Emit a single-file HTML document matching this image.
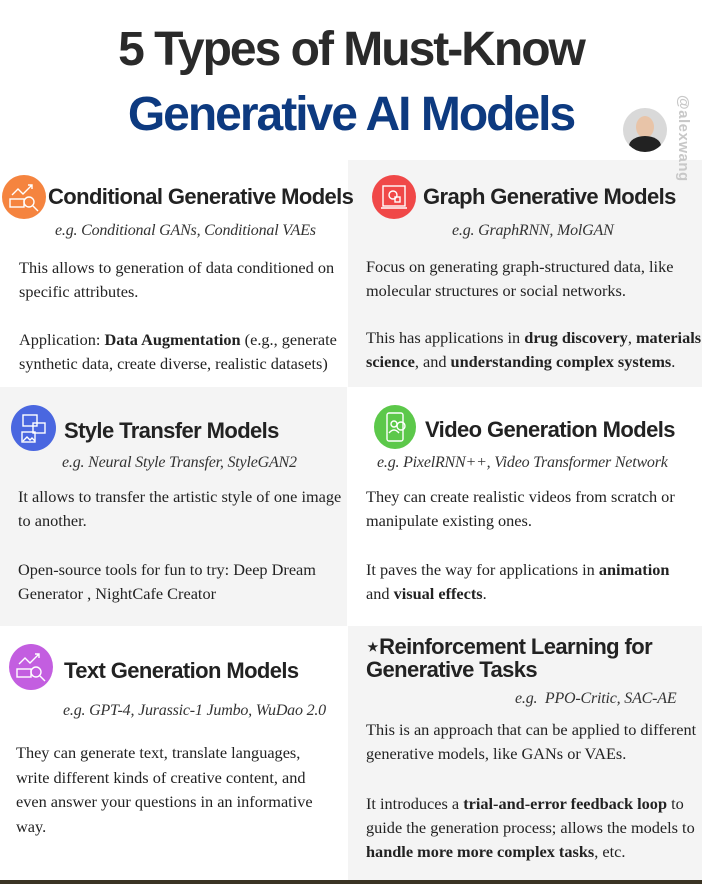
<!DOCTYPE html>
<html><head><meta charset="utf-8"><style>
*{margin:0;padding:0;box-sizing:border-box}
body{width:702px;height:884px;position:relative;background:#fff;overflow:hidden;font-family:"Liberation Serif",serif;color:#222}
.a{position:absolute;white-space:nowrap}
.g{position:absolute;background:#f4f4f4}
.t{font-family:"Liberation Sans",sans-serif;font-weight:bold;letter-spacing:-2px;font-size:48px;left:0;width:702px;text-align:center}
.h{font-family:"Liberation Sans",sans-serif;font-weight:bold;font-size:22px;letter-spacing:-0.6px;color:#222}
.e{font-style:italic;font-size:16px;letter-spacing:-0.2px;color:#333}
.b{font-size:16.3px;letter-spacing:0;color:#222;line-height:24px}
.c{position:absolute;border-radius:50%}
.c svg{position:absolute;left:0;top:0}
</style></head><body>
<div class="g" style="left:348px;top:160px;width:354px;height:227px"></div>
<div class="g" style="left:0;top:387px;width:347px;height:239px"></div>
<div class="g" style="left:348px;top:626px;width:354px;height:254px"></div>
<div style="position:absolute;left:0;top:880px;width:702px;height:4px;background:#3a3424"></div>

<div class="a t" style="top:22px;color:#2a2a2a">5 Types of Must-Know</div>
<div class="a t" style="top:87px;color:#0d3a80">Generative AI Models</div>
<div class="c" style="left:623px;top:108px;width:44px;height:44px;background:#d9d9d9;overflow:hidden">
 <div style="position:absolute;left:13px;top:8px;width:18px;height:22px;border-radius:50%;background:#e8c4a8"></div>
 <div style="position:absolute;left:6px;top:28px;width:32px;height:20px;border-radius:50%;background:#222"></div>
</div>
<div class="a" style="left:672px;top:95px;transform-origin:0 0;transform:rotate(90deg) translate(0,-20px);font-family:'Liberation Sans',sans-serif;font-weight:bold;font-size:15px;color:#c8c8c8;letter-spacing:0.5px">@alexwang</div>

<!-- icons -->
<div class="c" style="left:2px;top:175px;width:44px;height:44px;background:#f5843f"><svg width="44" height="44" fill="none" stroke="#fff" stroke-width="1.4"><path d="M10 20 L16 14 L21 19 L30 10 M26 10 h4 v4"/><rect x="8" y="24" width="14" height="8"/><circle cx="27" cy="27" r="5"/><path d="M31 31 L36 36"/></svg></div>
<div class="c" style="left:372px;top:175px;width:44px;height:44px;background:#f04848"><svg width="44" height="44" fill="none" stroke="#fff" stroke-width="1.4"><rect x="11" y="11" width="22" height="20"/><path d="M9 33 h26"/><circle cx="21" cy="20" r="4"/><rect x="23" y="22" width="5" height="5"/></svg></div>
<div class="c" style="left:11px;top:405px;width:45px;height:46px;background:#4a67e0"><svg width="45" height="46" fill="none" stroke="#fff" stroke-width="1.4"><rect x="12" y="10" width="14" height="11"/><rect x="22" y="18" width="12" height="10"/><rect x="11" y="27" width="13" height="10"/><path d="M12 36 l4-4 3 3 2-2 3 3"/></svg></div>
<div class="c" style="left:374px;top:405px;width:42px;height:44px;background:#5cc84a"><svg width="42" height="44" fill="none" stroke="#fff" stroke-width="1.4"><rect x="13" y="8" width="16" height="28" rx="2"/><circle cx="20" cy="19" r="3"/><path d="M15 28 q5-6 10 0"/><circle cx="27" cy="21" r="4"/></svg></div>
<div class="c" style="left:9px;top:644px;width:44px;height:46px;background:#c35ee0"><svg width="44" height="46" fill="none" stroke="#fff" stroke-width="1.4"><path d="M10 20 L16 14 L21 19 L30 10 M26 10 h4 v4"/><rect x="8" y="25" width="14" height="8"/><circle cx="27" cy="28" r="5"/><path d="M31 32 L36 37"/></svg></div>

<!-- section 1 -->
<div class="a h" style="left:48px;top:184px">Conditional Generative Models</div>
<div class="a e" style="left:55px;top:222px">e.g. Conditional GANs, Conditional VAEs</div>
<div class="a b" style="left:19px;top:256px">This allows to generation of data conditioned on<br>specific attributes.</div>
<div class="a b" style="left:19px;top:328px">Application: <b>Data Augmentation</b> (e.g., generate<br>synthetic data, create diverse, realistic datasets)</div>

<div class="a h" style="left:423px;top:184px">Graph Generative Models</div>
<div class="a e" style="left:452px;top:222px">e.g. GraphRNN, MolGAN</div>
<div class="a b" style="left:366px;top:255px">Focus on generating graph-structured data, like<br>molecular structures or social networks.</div>
<div class="a b" style="left:366px;top:326px">This has applications in <b>drug discovery</b>, <b>materials</b><br><b>science</b>, and <b>understanding complex systems</b>.</div>

<!-- section 2 -->
<div class="a h" style="left:64px;top:418px">Style Transfer Models</div>
<div class="a e" style="left:62px;top:454px">e.g. Neural Style Transfer, StyleGAN2</div>
<div class="a b" style="left:18px;top:485px">It allows to transfer the artistic style of one image<br>to another.</div>
<div class="a b" style="left:18px;top:558px">Open-source tools for fun to try: Deep Dream<br>Generator , NightCafe Creator</div>

<div class="a h" style="left:425px;top:417px">Video Generation Models</div>
<div class="a e" style="left:377px;top:454px">e.g. PixelRNN++, Video Transformer Network</div>
<div class="a b" style="left:366px;top:485px">They can create realistic videos from scratch or<br>manipulate existing ones.</div>
<div class="a b" style="left:366px;top:558px">It paves the way for applications in <b>animation</b><br>and <b>visual effects</b>.</div>

<!-- section 3 -->
<div class="a h" style="left:64px;top:658px">Text Generation Models</div>
<div class="a e" style="left:63px;top:702px">e.g. GPT-4, Jurassic-1 Jumbo, WuDao 2.0</div>
<div class="a b" style="left:16px;top:741px;line-height:24.5px">They can generate text, translate languages,<br>write different kinds of creative content, and<br>even answer your questions in an informative<br>way.</div>

<div class="a h" style="left:366px;top:635px;line-height:23px">⋆Reinforcement Learning for<br>Generative Tasks</div>
<div class="a e" style="left:515px;top:690px">e.g.&nbsp; PPO-Critic, SAC-AE</div>
<div class="a b" style="left:366px;top:718px">This is an approach that can be applied to different<br>generative models, like GANs or VAEs.</div>
<div class="a b" style="left:366px;top:792px">It introduces a <b>trial-and-error feedback loop</b> to<br>guide the generation process; allows the models to<br><b>handle more more complex tasks</b>, etc.</div>
</body></html>
